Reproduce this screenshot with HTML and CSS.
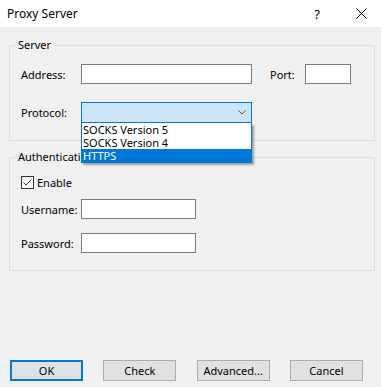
FILE: index.html
```html
<!DOCTYPE html>
<html lang="en">
<head>
  <meta charset="UTF-8">
  <title>Proxy Server</title>
  <link rel="stylesheet" href="styles.css">
</head>
<body>
  <div class="dialog">
    <div class="titlebar">
      <span class="title">Proxy Server</span>
      <span class="help">?</span>
      <svg class="close" width="11" height="11" viewBox="0 0 11 11">
        <path d="M0.5 0.5 L10.5 10.5 M10.5 0.5 L0.5 10.5" stroke="#000" stroke-width="1" fill="none"/>
      </svg>
    </div>

    <div class="content">
      <fieldset class="group server">
        <legend>Server</legend>
        <div class="row">
          <label class="lbl">Address:</label>
          <input type="text" class="field address">
          <label class="lbl port-lbl">Port:</label>
          <input type="text" class="field port">
        </div>
        <div class="row protocol-row">
          <label class="lbl">Protocol:</label>
          <div class="combo">
            <div class="combo-box">
              <svg width="8" height="5" viewBox="0 0 8 5">
                <path d="M0.5 0.5 L4 4 L7.5 0.5" stroke="#555" stroke-width="1" fill="none"/>
              </svg>
            </div>
            <ul class="combo-list">
              <li>SOCKS Version 5</li>
              <li>SOCKS Version 4</li>
              <li class="selected">HTTPS</li>
            </ul>
          </div>
        </div>
      </fieldset>

      <fieldset class="group auth">
        <legend>Authentication</legend>
        <label class="check">
          <svg width="13" height="13" viewBox="0 0 13 13">
            <rect x="0.5" y="0.5" width="12" height="12" fill="#fff" stroke="#333"/>
            <path d="M2.5 6.5 L5 9 L10.5 3.5" stroke="#333" stroke-width="1" fill="none"/>
          </svg>
          Enable
        </label>
        <div class="row">
          <label class="lbl">Username:</label>
          <input type="text" class="field user">
        </div>
        <div class="row">
          <label class="lbl">Password:</label>
          <input type="password" class="field user">
        </div>
      </fieldset>
    </div>

    <div class="buttons">
      <button class="btn default">OK</button>
      <button class="btn">Check</button>
      <button class="btn">Advanced...</button>
      <button class="btn">Cancel</button>
    </div>
  </div>
</body>
</html>
```

FILE: styles.css
```css
* {
  box-sizing: border-box;
}
body {
  margin: 0;
  font-family: "Noto Sans", sans-serif;
  font-size: 11px;
  color: #000;
  background: #f0f0f0;
}
.dialog {
  width: 381px;
  height: 387px;
  display: flex;
  flex-direction: column;
}
.titlebar {
  height: 27px;
  background: #fff;
  display: flex;
  align-items: center;
  padding: 0 14px 0 7px;
}
.title {
  flex: 1;
  font-size: 12px;
}
.help {
  font-size: 13px;
  margin-right: 36px;
}
.close {
  display: block;
}
.content {
  padding: 11px 6px 0 9px;
}
.group {
  margin: 0;
  border: 1px solid #dcdcdc;
  padding: 12px 10px 17px 11px;
  width: 366px;
}
.group legend {
  line-height: 14px;
  padding: 0 2px;
  margin-left: -5px;
}
.auth {
  margin-top: 9px;
}
.row {
  display: flex;
  align-items: center;
}
.protocol-row {
  margin-top: 18px;
}
.lbl {
  width: 60px;
}
.field {
  height: 20px;
  border: 1px solid #7a7a7a;
  background: #fff;
  margin: 0;
  padding: 0 2px;
  font: inherit;
}
.address {
  width: 171px;
}
.port-lbl {
  width: auto;
  margin-left: 18px;
  margin-right: 10px;
}
.port {
  width: 46px;
}
.combo {
  position: relative;
  width: 171px;
}
.combo-box {
  height: 21px;
  background: #cce4f7;
  border: 1px solid #0078d7;
  display: flex;
  align-items: center;
  justify-content: flex-end;
  padding-right: 5px;
}
.combo-box svg {
  display: block;
}
.combo-list {
  position: absolute;
  top: 100%;
  left: 0;
  width: 171px;
  margin: 0;
  padding: 0;
  list-style: none;
  background: #fff;
  border: 1px solid #0078d7;
  border-top: none;
  box-shadow: 2px 2px 2px rgba(0, 0, 0, 0.35);
  z-index: 2;
}
.combo-list li {
  height: 13px;
  line-height: 13px;
  padding-left: 1px;
  white-space: nowrap;
}
.combo-list .selected {
  background: #0078d7;
  color: #fff;
}
.check {
  display: flex;
  align-items: center;
  gap: 3px;
  height: 13px;
}
.check svg {
  display: block;
}
.auth .row {
  margin-top: 10px;
}
.auth .row + .row {
  margin-top: 14px;
}
.user {
  width: 115px;
}
.buttons {
  margin-top: auto;
  display: flex;
  justify-content: space-between;
  padding: 0 18px 6px 10px;
}
.btn {
  width: 73px;
  height: 21px;
  margin: 0;
  background: #e1e1e1;
  border: 1px solid #adadad;
  font: inherit;
  color: #000;
  padding: 0;
}
.btn.default {
  border: 2px solid #0078d7;
}
```
